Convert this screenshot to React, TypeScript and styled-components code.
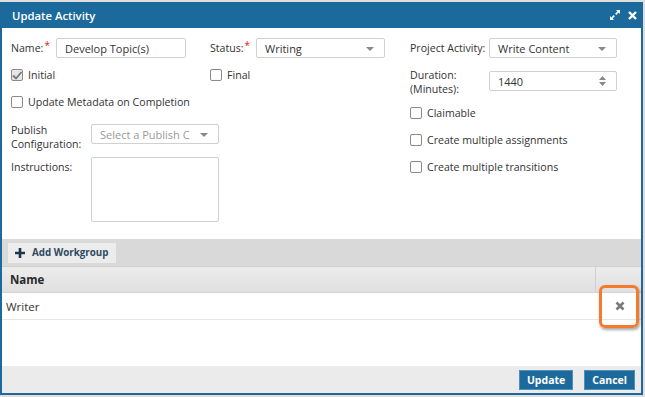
import styled, { createGlobalStyle } from "styled-components";

const BLUE = "#1c6a9b";

const GlobalStyle = createGlobalStyle`
  html, body {
    margin: 0;
    padding: 0;
    background: #dedede;
    font-family: "Open Sans", "Liberation Sans", sans-serif;
  }
  * { box-sizing: border-box; }
`;

export default function App() {
  return (
    <>
      <GlobalStyle />
      <Page>
        <Dialog>
          <TitleBar>
            <Title>Update Activity</Title>
            <TitleIcons>
              <svg width="10" height="10" viewBox="0 0 10 10">
                <path d="M6 0H10V4L8.6 2.6L6.3 4.9L5.1 3.7L7.4 1.4Z" fill="#fff" />
                <path d="M4 10H0V6L1.4 7.4L3.7 5.1L4.9 6.3L2.6 8.6Z" fill="#fff" />
              </svg>
              <svg width="9" height="9" viewBox="0 0 9 9">
                <path d="M1 1L8 8M8 1L1 8" stroke="#fff" strokeWidth="2.4" />
              </svg>
            </TitleIcons>
          </TitleBar>

          <Form>
            <LeftPane>
              <Row>
                <Half>
                  <Label $w={45}>
                    Name:<Req>*</Req>
                  </Label>
                  <TextBox $w={130}>Develop Topic(s)</TextBox>
                </Half>
                <Half>
                  <Label $w={46}>
                    Status:<Req>*</Req>
                  </Label>
                  <TextBox $w={129}>
                    Writing
                    <Caret />
                  </TextBox>
                </Half>
              </Row>
              <Row $top={10}>
                <Half>
                  <Check $checked label="Initial" />
                </Half>
                <Half>
                  <Check label="Final" />
                </Half>
              </Row>
              <Row $top={13}>
                <Check label="Update Metadata on Completion" />
              </Row>
              <Row $top={15} $align="flex-start">
                <Label $w={80} $twoLine>
                  Publish
                  <br />
                  Configuration:
                </Label>
                <TextBox $w={128} $muted>
                  Select a Publish C
                  <Caret />
                </TextBox>
              </Row>
              <Row $top={6} $align="flex-start">
                <Label $w={80} $pad={3}>
                  Instructions:
                </Label>
                <TextArea />
              </Row>
            </LeftPane>

            <RightPane>
              <Row>
                <Label $w={79}>Project Activity:</Label>
                <TextBox $w={128}>
                  Write Content
                  <Caret />
                </TextBox>
              </Row>
              <Row $top={13} $align="flex-start">
                <Label $w={79} $twoLine $pad={-2}>
                  Duration:
                  <br />
                  (Minutes):
                </Label>
                <TextBox $w={128}>
                  1440
                  <Spinner>
                    <svg width="7" height="10" viewBox="0 0 7 10">
                      <path d="M0 4L3.5 0L7 4Z M0 6L3.5 10L7 6Z" fill="#888" />
                    </svg>
                  </Spinner>
                </TextBox>
              </Row>
              <Row $top={10}>
                <Check label="Claimable" />
              </Row>
              <Row $top={13}>
                <Check label="Create multiple assignments" />
              </Row>
              <Row $top={13}>
                <Check label="Create multiple transitions" />
              </Row>
            </RightPane>
          </Form>

          <Toolbar>
            <ToolButton>
              <svg width="10" height="10" viewBox="0 0 10 10">
                <path d="M3.7 0H6.3V3.7H10V6.3H6.3V10H3.7V6.3H0V3.7H3.7Z" fill="#1e3448" />
              </svg>
              Add Workgroup
            </ToolButton>
          </Toolbar>

          <Table>
            <HeadRow>
              <HeadCell>Name</HeadCell>
              <ActionCol />
            </HeadRow>
            <BodyRow>
              <BodyCell>Writer</BodyCell>
              <ActionCol>
                <svg width="10" height="10" viewBox="0 0 10 10">
                  <path d="M1.5 1.5L8.5 8.5M8.5 1.5L1.5 8.5" stroke="#7a7a7a" strokeWidth="2.6" />
                </svg>
                <Highlight />
              </ActionCol>
            </BodyRow>
          </Table>

          <Spacer />

          <Footer>
            <PrimaryButton>Update</PrimaryButton>
            <PrimaryButton>Cancel</PrimaryButton>
          </Footer>
        </Dialog>
      </Page>
    </>
  );
}

function Check({ label, $checked }: { label: string; $checked?: boolean }) {
  return (
    <CheckWrap>
      <Box $checked={$checked}>
        {$checked && (
          <svg width="10" height="9" viewBox="0 0 10 9">
            <path d="M1 4.5L4 7.5L9.5 1" stroke="#777" strokeWidth="1.8" fill="none" />
          </svg>
        )}
      </Box>
      {label}
    </CheckWrap>
  );
}

const Page = styled.div`
  width: 645px;
  height: 397px;
  padding-top: 2px;
`;

const Dialog = styled.div`
  width: 643px;
  height: 393px;
  border: 2px solid ${BLUE};
  border-top: 0;
  background: #fff;
  display: flex;
  flex-direction: column;
`;

const TitleBar = styled.div`
  height: 26px;
  flex: none;
  background: ${BLUE};
  display: flex;
  align-items: center;
  justify-content: space-between;
  margin: 0 -2px;
  padding: 0 6px 0 12px;
`;

const Title = styled.div`
  color: #fff;
  font-size: 11.3px;
  font-weight: 600;
`;

const TitleIcons = styled.div`
  display: flex;
  align-items: center;
  gap: 8px;
`;

const Form = styled.div`
  height: 211px;
  flex: none;
  display: flex;
  padding: 10px 0 0 9px;
  font-size: 10.6px;
  color: #333;
`;

const LeftPane = styled.div`
  width: 399px;
  display: flex;
  flex-direction: column;
`;

const RightPane = styled.div`
  width: 210px;
  display: flex;
  flex-direction: column;
`;

const Row = styled.div<{ $top?: number; $align?: string }>`
  display: flex;
  align-items: ${({ $align }) => $align || "center"};
  margin-top: ${({ $top }) => $top || 0}px;
`;

const Half = styled.div`
  width: 199px;
  display: flex;
  align-items: center;
`;

const Label = styled.div<{ $w: number; $twoLine?: boolean; $pad?: number }>`
  width: ${({ $w }) => $w}px;
  flex: none;
  line-height: ${({ $twoLine }) => ($twoLine ? "13.5px" : "14px")};
  margin-top: ${({ $pad }) => $pad || 0}px;
  white-space: nowrap;
`;

const Req = styled.span`
  color: #e02020;
  font-size: 10px;
  vertical-align: top;
  position: relative;
  top: -3px;
  margin-left: 1px;
`;

const TextBox = styled.div<{ $w: number; $muted?: boolean }>`
  position: relative;
  width: ${({ $w }) => $w}px;
  height: 20px;
  border: 1px solid #d0d0d0;
  border-radius: 2px;
  padding: 0 20px 0 8px;
  display: flex;
  align-items: center;
  font-size: 11px;
  color: ${({ $muted }) => ($muted ? "#9a9a9a" : "#333")};
  white-space: nowrap;
  overflow: hidden;
`;

const Caret = styled.span`
  position: absolute;
  right: 10px;
  top: 8px;
  border-left: 4px solid transparent;
  border-right: 4px solid transparent;
  border-top: 4px solid #888;
`;

const Spinner = styled.span`
  position: absolute;
  right: 10px;
  top: 4px;
  display: flex;
`;

const TextArea = styled.div`
  width: 128px;
  height: 65px;
  border: 1px solid #d0d0d0;
  border-radius: 2px;
`;

const CheckWrap = styled.div`
  display: flex;
  align-items: center;
  gap: 5px;
  line-height: 14px;
  white-space: nowrap;
`;

const Box = styled.span<{ $checked?: boolean }>`
  width: 12px;
  height: 12px;
  border: 1px solid #8a8a8a;
  border-radius: 2px;
  background: ${({ $checked }) => ($checked ? "#e6e6e6" : "#fff")};
  display: flex;
  align-items: center;
  justify-content: center;
`;

const Toolbar = styled.div`
  height: 27px;
  flex: none;
  background: #d9d9d9;
  display: flex;
  align-items: center;
  padding-left: 6px;
`;

const ToolButton = styled.div`
  height: 20px;
  padding: 0 8px 0 7px;
  background: #ececec;
  display: flex;
  align-items: center;
  gap: 7px;
  font-size: 9.8px;
  font-weight: 700;
  color: #2c4a63;
`;

const Table = styled.div`
  flex: none;
  color: #333;
`;

const HeadRow = styled.div`
  height: 27px;
  display: flex;
  background: linear-gradient(#ececec, #e0e0e0);
  border-top: 1px solid #cfcfcf;
  border-bottom: 1px solid #d4d4d4;
`;

const HeadCell = styled.div`
  flex: 1;
  display: flex;
  align-items: center;
  padding-left: 8px;
  font-weight: 700;
  font-size: 11.5px;
  color: #2a2a2a;
`;

const ActionCol = styled.div`
  position: relative;
  width: 46px;
  flex: none;
  border-left: 1px solid #d0d0d0;
  display: flex;
  align-items: center;
  justify-content: center;
  padding-left: 4px;
`;

const BodyRow = styled.div`
  height: 27px;
  display: flex;
  border-bottom: 1px solid #e6e6e6;

  ${ActionCol} {
    border-left: 0;
  }
`;

const BodyCell = styled.div`
  flex: 1;
  display: flex;
  align-items: center;
  padding-left: 4px;
  font-size: 11.5px;
`;

const Highlight = styled.div`
  position: absolute;
  left: 4px;
  top: -8px;
  width: 40px;
  height: 43px;
  border: 3px solid #f47b2c;
  border-radius: 6px;
  box-shadow: 1px 2px 3px rgba(0, 0, 0, 0.35);
`;

const Spacer = styled.div`
  flex: 1;
`;

const Footer = styled.div`
  height: 27px;
  flex: none;
  background: #ebebeb;
  display: flex;
  align-items: center;
  justify-content: flex-end;
  gap: 11px;
  padding-right: 6px;
`;

const PrimaryButton = styled.div`
  height: 20px;
  padding: 0 7px;
  background: ${BLUE};
  border: 1px solid #4f8fb8;
  color: #fff;
  font-size: 10.5px;
  font-weight: 700;
  display: flex;
  align-items: center;
`;
